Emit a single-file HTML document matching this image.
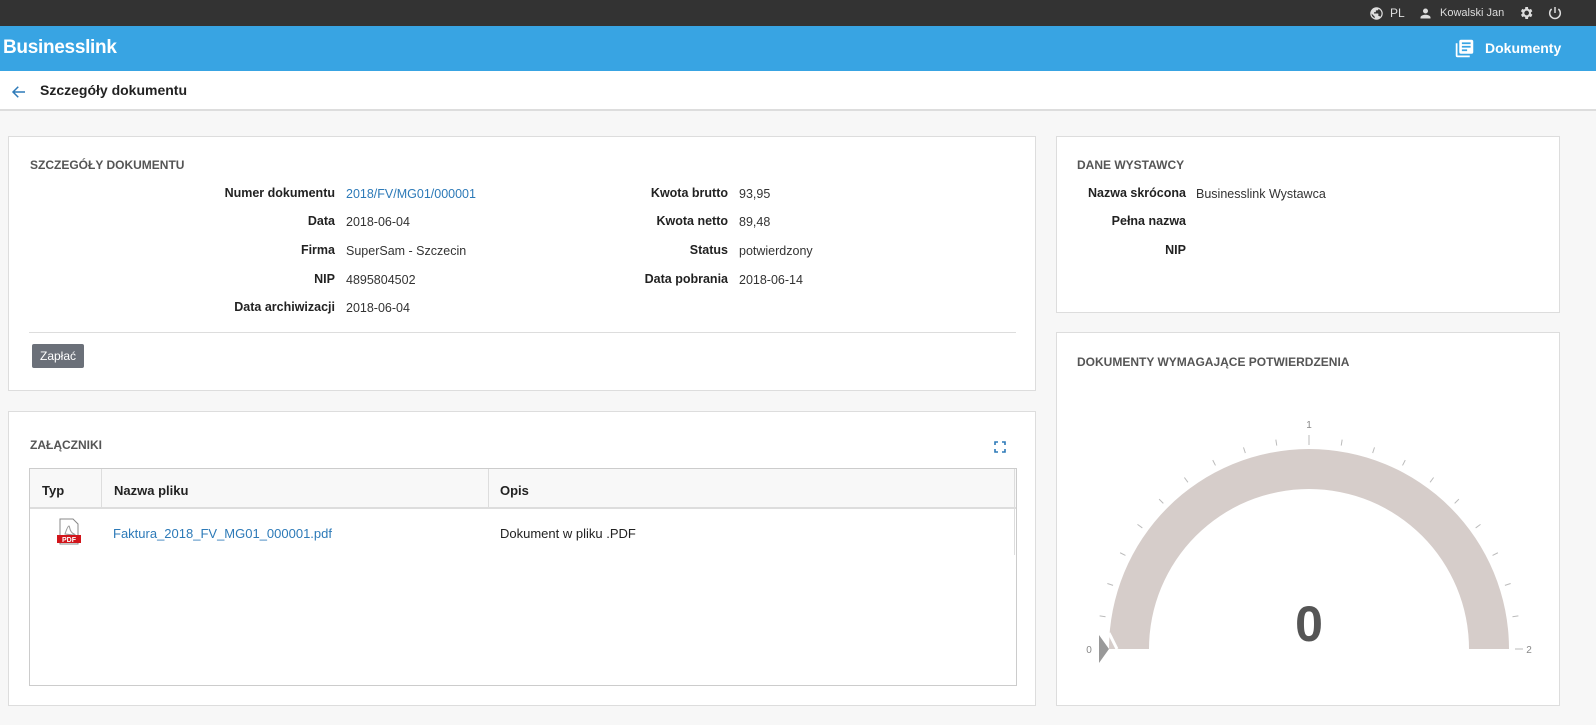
<!DOCTYPE html>
<html><head><meta charset="utf-8"><style>
*{box-sizing:border-box;margin:0;padding:0}
body{width:1596px;height:725px;overflow:hidden;background:#f7f7f7;font-family:"Liberation Sans",Arial,sans-serif;font-size:13px;color:#222;position:relative}
.top{position:absolute;left:0;top:0;width:1596px;height:26px;background:#333;color:#ddd;font-size:12px}
.blue{position:absolute;left:0;top:26px;width:1596px;height:45px;background:#38a4e3;color:#fff}
.sub{position:absolute;left:0;top:71px;width:1596px;height:40px;background:#fff;border-bottom:2px solid #ddd}
.card{position:absolute;background:#fff;border:1px solid #ddd}
.h{position:absolute;font-size:12px;font-weight:bold;color:#555}
.lbl{position:absolute;font-weight:bold;text-align:right;font-size:12.5px}
.val{position:absolute;font-size:12.5px;color:#333}
a{color:#2d7ab8;text-decoration:none}
</style></head><body>
<div class="top">
<svg style="position:absolute;left:1369px;top:6px" width="15" height="15" viewBox="0 0 24 24"><path fill="#ddd" d="M12 2a10 10 0 100 20 10 10 0 000-20zm-1 17.9A8 8 0 014 12l5 5v1a2 2 0 002 2zm6.9-2.5A2 2 0 0016 16h-1v-3a1 1 0 00-1-1H8v-2h2a1 1 0 001-1V7h2a2 2 0 002-2v-.4a8 8 0 012.9 12.8z"/></svg>
<span style="position:absolute;left:1390px;top:6px">PL</span>
<svg style="position:absolute;left:1418px;top:6px" width="15" height="15" viewBox="0 0 24 24"><path fill="#ddd" d="M12 12a4 4 0 100-8 4 4 0 000 8zm0 2c-3 0-8 1.5-8 4v2h16v-2c0-2.5-5-4-8-4z"/></svg>
<span style="position:absolute;left:1440px;top:7px;font-size:11px">Kowalski Jan</span>
<svg style="position:absolute;left:1518px;top:5px" width="16" height="16" viewBox="0 0 24 24"><path fill="#ddd" d="M19.4 13a7 7 0 000-2l2.1-1.6-2-3.5-2.5 1a7 7 0 00-1.7-1L15 3h-4l-.4 2.9a7 7 0 00-1.7 1l-2.5-1-2 3.5L6.6 11a7 7 0 000 2l-2.1 1.6 2 3.5 2.5-1a7 7 0 001.7 1L11 21h4l.4-2.9a7 7 0 001.7-1l2.5 1 2-3.5zM13 15.5a3.5 3.5 0 110-7 3.5 3.5 0 010 7z"/></svg>
<svg style="position:absolute;left:1547px;top:5px" width="16" height="16" viewBox="0 0 24 24"><path fill="none" stroke="#ddd" stroke-width="2.2" d="M12 3v9M7 6a8 8 0 1010 0"/></svg>
</div>
<div class="blue">
<span style="position:absolute;left:3px;top:11px;font-size:19px;font-weight:bold;letter-spacing:-0.3px">Businesslink</span>
<svg style="position:absolute;left:1454px;top:12px" width="21" height="21" viewBox="0 0 24 24"><path fill="#fff" d="M4 6H2v14a2 2 0 002 2h14v-2H4zm16-4H8a2 2 0 00-2 2v12a2 2 0 002 2h12a2 2 0 002-2V4a2 2 0 00-2-2zm-1 9h-10V9h10zm-4 4H9v-2h6zm4-8H9V5h10z"/></svg>
<span style="position:absolute;left:1485px;top:14px;font-size:14px;font-weight:bold">Dokumenty</span>
</div>
<div class="sub">
<svg style="position:absolute;left:10px;top:12px" width="18" height="18" viewBox="0 0 24 24"><path fill="none" stroke="#2d7ab8" stroke-width="2" d="M20 12H5M11 5l-7 7 7 7"/></svg>
<span style="position:absolute;left:40px;top:11px;font-size:14px;font-weight:bold">Szczegóły dokumentu</span>
</div>

<div class="card" style="left:8px;top:136px;width:1028px;height:255px">
<div class="h" style="left:21px;top:21px">SZCZEGÓŁY DOKUMENTU</div>
<div class="lbl" style="right:700px;top:49px">Numer dokumentu</div><div class="val" style="left:337px;top:50px"><a>2018/FV/MG01/000001</a></div>
<div class="lbl" style="right:700px;top:77px">Data</div><div class="val" style="left:337px;top:78px">2018-06-04</div>
<div class="lbl" style="right:700px;top:106px">Firma</div><div class="val" style="left:337px;top:107px">SuperSam - Szczecin</div>
<div class="lbl" style="right:700px;top:135px">NIP</div><div class="val" style="left:337px;top:136px">4895804502</div>
<div class="lbl" style="right:700px;top:163px">Data archiwizacji</div><div class="val" style="left:337px;top:164px">2018-06-04</div>
<div class="lbl" style="right:307px;top:49px">Kwota brutto</div><div class="val" style="left:730px;top:50px">93,95</div>
<div class="lbl" style="right:307px;top:77px">Kwota netto</div><div class="val" style="left:730px;top:78px">89,48</div>
<div class="lbl" style="right:307px;top:106px">Status</div><div class="val" style="left:730px;top:107px">potwierdzony</div>
<div class="lbl" style="right:307px;top:135px">Data pobrania</div><div class="val" style="left:730px;top:136px">2018-06-14</div>
<div style="position:absolute;left:20px;top:195px;width:987px;height:1px;background:#ddd"></div>
<div style="position:absolute;left:23px;top:207px;width:52px;height:24px;background:#6b7079;color:#fff;font-size:12px;text-align:center;line-height:24px;border-radius:2px">Zapłać</div>
</div>

<div class="card" style="left:8px;top:411px;width:1028px;height:295px">
<div class="h" style="left:21px;top:26px">ZAŁĄCZNIKI</div>
<svg style="position:absolute;left:985px;top:29px" width="12" height="12" viewBox="0 0 12 12"><path fill="none" stroke="#2d7ab8" stroke-width="1.6" d="M1 4V1h3M8 1h3v3M11 8v3H8M4 11H1V8"/></svg>
<div style="position:absolute;left:20px;top:56px;width:988px;height:218px;border:1px solid #ccc">
<div style="position:absolute;left:0;top:0;width:986px;height:40px;background:#f8f8f8;border-bottom:2px solid #ddd"></div>
<div style="position:absolute;left:71px;top:0;width:1px;height:40px;background:#ddd"></div>
<div style="position:absolute;left:458px;top:0;width:1px;height:40px;background:#ddd"></div>
<div style="position:absolute;left:984px;top:0;width:1px;height:86px;background:#ddd"></div>
<b style="position:absolute;left:12px;top:14px">Typ</b>
<b style="position:absolute;left:84px;top:14px">Nazwa pliku</b>
<b style="position:absolute;left:470px;top:14px">Opis</b>
<svg style="position:absolute;left:26px;top:49px" width="26" height="28" viewBox="0 0 26 28"><path d="M4 1h13l5 5v20H4z" fill="#fff" stroke="#888"/><path d="M9 16c2-6 3-8 4-8s0 6 5 8-9 0-9 0z" fill="none" stroke="#999" stroke-width="1"/><rect x="1" y="17" width="24" height="8" fill="#d2151b"/><text x="13" y="24" font-size="7" font-weight="bold" fill="#fff" text-anchor="middle" font-family="Liberation Sans">PDF</text></svg>
<a style="position:absolute;left:83px;top:57px">Faktura_2018_FV_MG01_000001.pdf</a>
<span style="position:absolute;left:470px;top:57px">Dokument w pliku .PDF</span>
</div>
</div>

<div class="card" style="left:1056px;top:136px;width:504px;height:177px">
<div class="h" style="left:20px;top:21px">DANE WYSTAWCY</div>
<div class="lbl" style="right:373px;top:49px">Nazwa skrócona</div><div class="val" style="left:139px;top:50px">Businesslink Wystawca</div>
<div class="lbl" style="right:373px;top:77px">Pełna nazwa</div>
<div class="lbl" style="right:373px;top:106px">NIP</div>
</div>

<div class="card" style="left:1056px;top:332px;width:504px;height:374px">
<div class="h" style="left:20px;top:22px">DOKUMENTY WYMAGAJĄCE POTWIERDZENIA</div>
<svg style="position:absolute;left:0;top:0" width="504" height="374" viewBox="0 0 504 374">
<g transform="translate(252,316)">
<path d="M-200 0A200 200 0 0 1 200 0H160A160 160 0 0 0 -160 0Z" fill="#d6cdca"/>
<g stroke="#bbb" stroke-width="1">
<line x1="-212" y1="0" x2="-206" y2="0" transform="rotate(9)"/>
<line x1="-212" y1="0" x2="-206" y2="0" transform="rotate(18)"/>
<line x1="-212" y1="0" x2="-206" y2="0" transform="rotate(27)"/>
<line x1="-212" y1="0" x2="-206" y2="0" transform="rotate(36)"/>
<line x1="-212" y1="0" x2="-206" y2="0" transform="rotate(45)"/>
<line x1="-212" y1="0" x2="-206" y2="0" transform="rotate(54)"/>
<line x1="-212" y1="0" x2="-206" y2="0" transform="rotate(63)"/>
<line x1="-212" y1="0" x2="-206" y2="0" transform="rotate(72)"/>
<line x1="-212" y1="0" x2="-206" y2="0" transform="rotate(81)"/>
<line x1="-214" y1="0" x2="-204" y2="0" transform="rotate(90)"/>
<line x1="-212" y1="0" x2="-206" y2="0" transform="rotate(99)"/>
<line x1="-212" y1="0" x2="-206" y2="0" transform="rotate(108)"/>
<line x1="-212" y1="0" x2="-206" y2="0" transform="rotate(117)"/>
<line x1="-212" y1="0" x2="-206" y2="0" transform="rotate(126)"/>
<line x1="-212" y1="0" x2="-206" y2="0" transform="rotate(135)"/>
<line x1="-212" y1="0" x2="-206" y2="0" transform="rotate(144)"/>
<line x1="-212" y1="0" x2="-206" y2="0" transform="rotate(153)"/>
<line x1="-212" y1="0" x2="-206" y2="0" transform="rotate(162)"/>
<line x1="-212" y1="0" x2="-206" y2="0" transform="rotate(171)"/>
<line x1="206" y1="0" x2="214" y2="0"/>
</g>
<path d="M-210 -14L-200 0-210 14Z" fill="#999"/>
<path d="M-200 -16L-192 0" stroke="#fff" stroke-width="3"/>
<text x="-220" y="4" font-size="10" fill="#888" text-anchor="middle" font-family="Liberation Sans">0</text>
<text x="220" y="4" font-size="10" fill="#888" text-anchor="middle" font-family="Liberation Sans">2</text>
<text x="0" y="-221" font-size="10" fill="#888" text-anchor="middle" font-family="Liberation Sans">1</text>
<text x="0" y="-8" font-size="50" font-weight="bold" fill="#555" text-anchor="middle" font-family="Liberation Sans">0</text>
</g>
</svg>
</div>
</body></html>
